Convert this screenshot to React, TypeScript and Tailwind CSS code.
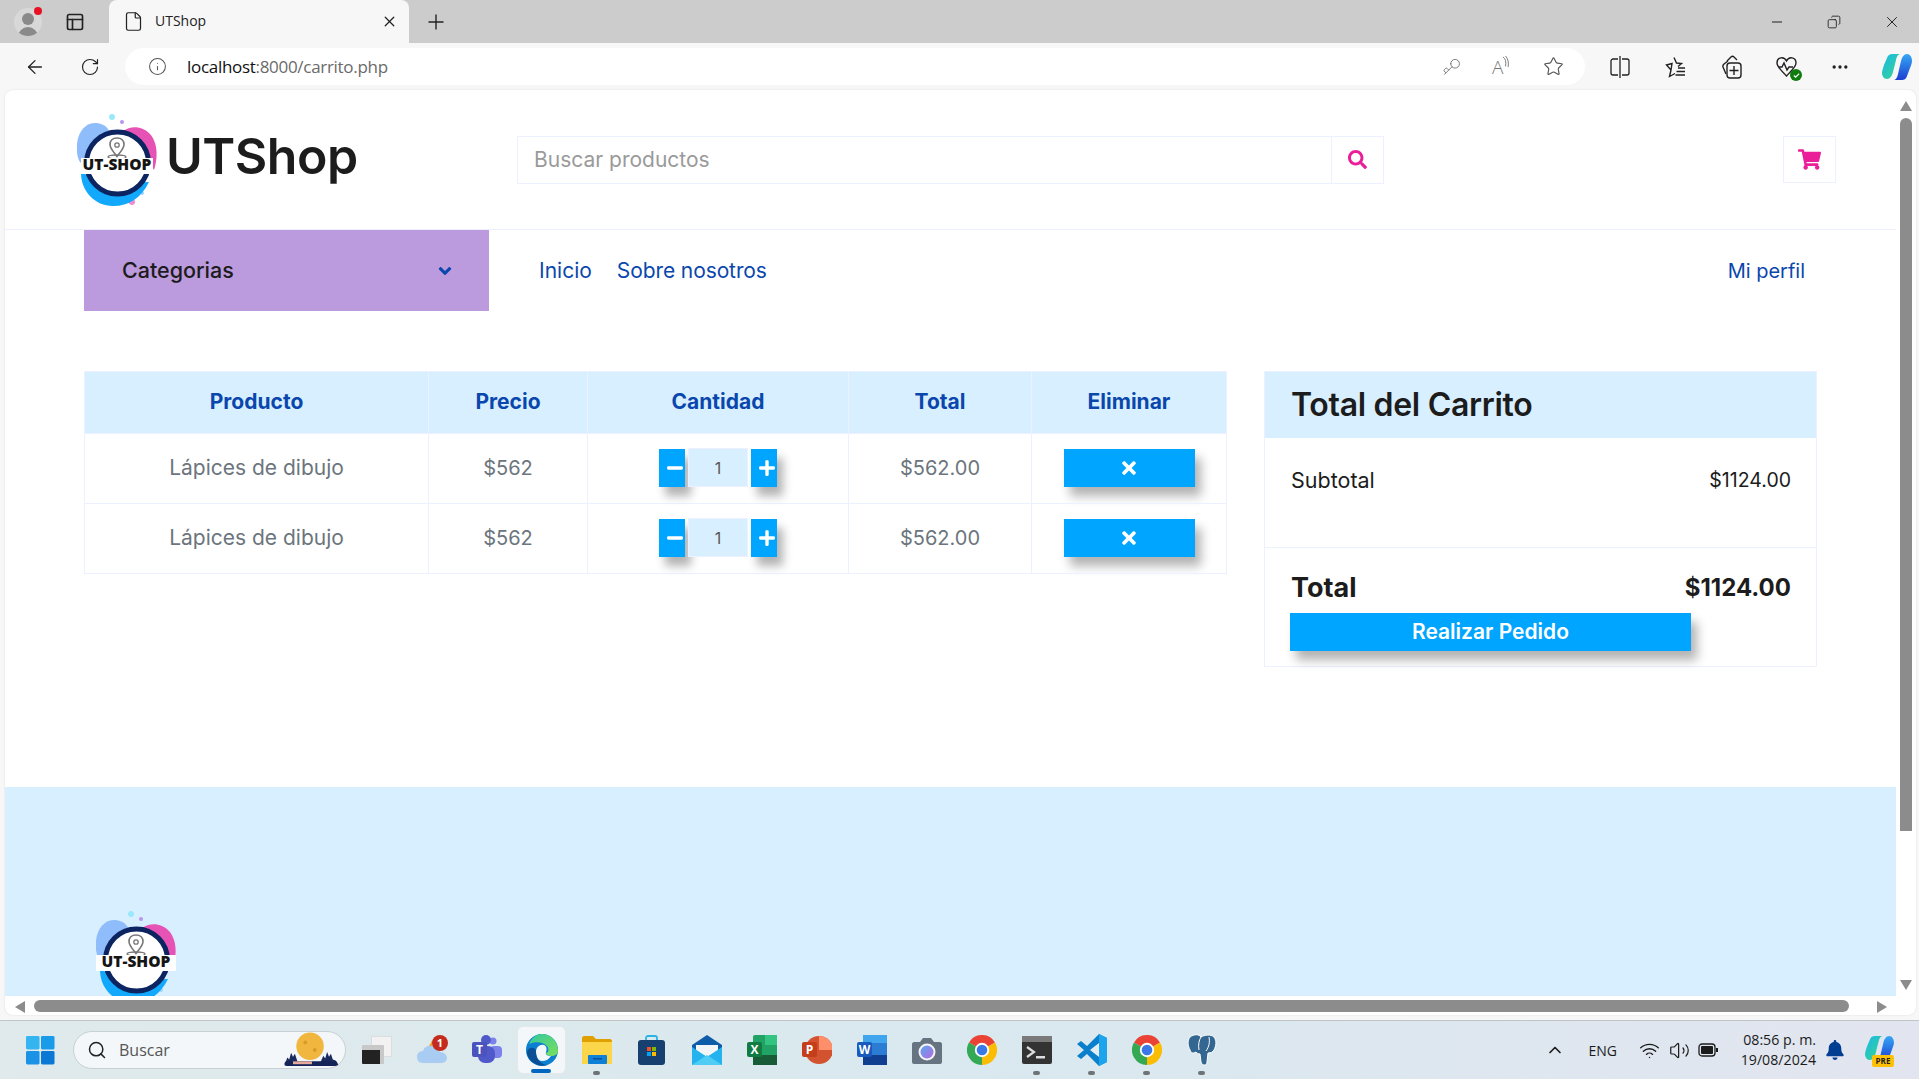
import React from "react";
import { FaSearch, FaShoppingCart, FaAngleDown, FaMinus, FaPlus, FaTimes, FaBell } from "react-icons/fa";
import { ArrowLeft, RotateCw, Info, Key, Star, X, Plus, Minus, Copy, Search, ChevronUp, Wifi, Volume2, MoreHorizontal, File, PanelsTopLeft } from "lucide-react";

const cartItems = [
  { name: "Lápices de dibujo", price: "$562", qty: 1, total: "$562.00" },
  { name: "Lápices de dibujo", price: "$562", qty: 1, total: "$562.00" },
];

function Logo({ band }: { band?: boolean }) {
  return (
    <svg viewBox="0 0 80 94" className="w-[80px] h-[94px] shrink-0">
      <circle cx="35" cy="4" r="3" fill="#9be7fb" />
      <circle cx="45" cy="9" r="2" fill="#b794f0" />
      <circle cx="55" cy="89" r="3" fill="#f28ccb" />
      <circle cx="65" cy="80" r="2" fill="#9fd4fb" />
      <path d="M0 40C-2 20 8 9 20 10c9 1 14 8 14 14L8 52C3 52 1 46 0 40z" fill="#8fbdfb" />
      <path d="M46 18c8-6 20-5 27 3 8 9 8 24 4 36L60 30z" fill="#e653b4" />
      <path d="M4 60c0 18 14 33 32 33 16 0 28-8 36-24L40 70z" fill="#12a8fb" />
      <circle cx="40.500" cy="50" r="31" fill="#ffffff" stroke="#0c2560" strokeWidth="5" />
      <path d="M40 25c-4.500 0-7 3-7 6.500 0 4 4 8 7 12 3-4 7-8 7-12 0-3.500-2.500-6.500-7-6.500z" fill="none" stroke="#777777" strokeWidth="1.600" />
      <circle cx="40" cy="32" r="2.200" fill="none" stroke="#777777" strokeWidth="1.300" />
      <ellipse cx="40" cy="44" rx="9" ry="2" fill="none" stroke="#777777" strokeWidth="1.300" />
      <rect x={band ? 0 : 4} y="45" width={band ? 80 : 72} height="16" fill="#ffffff" />
      <text x="40" y="57" textAnchor="middle" fontFamily="'Open Sans', sans-serif" fontWeight="800" fontSize="15.500" fill="#151515">
        UT-SHOP
      </text>
    </svg>
  );
}

function ChromeLogo() {
  return (
    <svg viewBox="0 0 48 48" className="w-[30px] h-[30px]">
      <path d="M24 24 3.200 12A24 24 0 0 1 44.800 12Z" fill="#ea4335" />
      <path d="M24 24 3.200 12A24 24 0 0 0 24 48Z" fill="#34a853" />
      <path d="M24 24 44.800 12A24 24 0 0 1 24 48Z" fill="#fbbc04" />
      <circle cx="24" cy="24" r="11.500" fill="#ffffff" />
      <circle cx="24" cy="24" r="8.500" fill="#3b78e7" />
    </svg>
  );
}

function CopilotLogo({ size, id }: { size: string; id: string }) {
  return (
    <svg viewBox="0 0 30 28" className={size}>
      <defs>
        <linearGradient id={`${id}A`} x1="0" y1="0" x2="1" y2="1">
          <stop offset="0" stopColor="#19b8e8" />
          <stop offset="1" stopColor="#3bd68a" />
        </linearGradient>
        <linearGradient id={`${id}B`} x1="0" y1="0" x2="0" y2="1">
          <stop offset="0" stopColor="#35a8f5" />
          <stop offset="1" stopColor="#1c3fd2" />
        </linearGradient>
      </defs>
      <path d="M10 1h9c-3 0-4 2-5 6l-3 12c-1 4-3 7-6 7-3 0-5-3-5-6 0-2 1-5 2-8l3-7c1-3 3-4 5-4z" fill={`url(#${id}A)`} />
      <path d="M20 27h-9c3 0 4-2 5-6l3-13c1-4 3-7 6-7 3 0 5 3 5 7 0 2-1 4-2 7l-3 8c-1 3-3 4-5 4z" fill={`url(#${id}B)`} />
    </svg>
  );
}

function TabBar() {
  return (
    <div className="h-[43px] shrink-0 bg-[#cccccc] flex items-end">
      <div className="w-[109px] h-[43px] flex items-center">
        <div className="relative ml-[14px] w-[28px] h-[28px] rounded-full bg-[#d8d8d8] overflow-hidden">
          <div className="mx-auto mt-[5px] w-[12px] h-[12px] rounded-full bg-[#8a8a8a]" />
          <div className="mx-auto mt-[2px] w-[20px] h-[12px] rounded-t-full bg-[#8a8a8a]" />
        </div>
        <div className="w-[8px] h-[8px] -ml-[8px] -mt-[21px] rounded-full bg-[#e81123] z-10" />
        <PanelsTopLeft className="ml-[23px] w-[20px] h-[20px] text-[#222222]" strokeWidth={2} />
      </div>
      <div className="w-[300px] h-[43px] bg-[#f7f7f7] rounded-t-lg flex items-center pl-[14px] pr-[11px]">
        <File className="w-[21px] h-[21px] text-[#222222]" strokeWidth={1.400} />
        <span className="ml-[11px] text-[14px] -mt-[2px] text-[#222222] flex-1">UTShop</span>
        <X className="w-[17px] h-[17px] text-[#222222]" strokeWidth={1.800} />
      </div>
      <div className="h-[43px] flex items-center ml-[15px]">
        <Plus className="w-[24px] h-[24px] text-[#222222]" strokeWidth={1.400} />
      </div>
      <div className="ml-auto h-[43px] flex items-center pr-[18px] gap-[42px] text-[#222222]">
        <Minus className="w-[16px] h-[16px]" strokeWidth={1.500} />
        <Copy className="w-[14px] h-[14px] scale-x-[-1]" strokeWidth={1.500} />
        <X className="w-[18px] h-[18px]" strokeWidth={1.300} />
      </div>
    </div>
  );
}

function Toolbar() {
  return (
    <div className="h-[47px] shrink-0 bg-[#f7f7f7] flex items-start pt-[5px] text-[#222222]">
      <div className="w-[125px] h-[37px] flex items-center pl-[24px] gap-[34px]">
        <ArrowLeft className="w-[22px] h-[22px]" strokeWidth={1.400} />
        <RotateCw className="w-[20px] h-[20px]" strokeWidth={1.400} />
      </div>
      <div className="w-[1460px] h-[37px] bg-white rounded-full flex items-center pl-[23px] pr-[21px]">
        <Info className="w-[19px] h-[19px] text-[#555555]" strokeWidth={1.300} />
        <span className="ml-[20px] text-[17px] tracking-[-0.3px] text-[#111111]">
          localhost<span className="text-[#6a6a6a]">:8000/carrito.php</span>
        </span>
        <div className="ml-auto flex items-center gap-[31px] text-[#777777]">
          <Key className="w-[19px] h-[19px] rotate-180" strokeWidth={1.200} />
          <div className="flex items-start w-[20px] h-[22px]">
            <span className="text-[19px] leading-[22px] font-light">A</span>
            <svg viewBox="0 0 8 14" className="w-[7px] h-[12px] -ml-[1px]" fill="none" stroke="#777777" strokeWidth="1.100">
              <path d="M1 1c3 2 4 6 3 11" />
              <path d="M4 0c3 3 4 8 3 13" />
            </svg>
          </div>
          <Star className="w-[21px] h-[21px] text-[#555555]" strokeWidth={1.300} />
        </div>
      </div>
      <div className="flex-1 h-[37px] flex items-center pl-[25px] gap-[35px]">
        <svg viewBox="0 0 20 22" className="w-[20px] h-[22px]" fill="none" stroke="#222222" strokeWidth="1.300">
          <path d="M10 0v22M8 3H3C2 3 1 4 1 5v12c0 1 1 2 2 2h5M12 3h5c1 0 2 1 2 2v12c0 1-1 2-2 2h-5" />
        </svg>
        <svg viewBox="0 0 21 22" className="w-[21px] h-[22px]" fill="none" stroke="#222222" strokeWidth="1.400">
          <path d="M9 1.500 11.500 7l5 .500-3.500 3M6 14l-1.500 6.500 5.500-3M6 14l-4.500-5 5.500-1.500z" />
          <path d="M13 12h7M11.500 15.500H20M10.500 19H20" />
        </svg>
        <svg viewBox="0 0 21 24" className="w-[21px] h-[24px]" fill="none" stroke="#222222" strokeWidth="1.400">
          <path d="M6 6 10 2c1-1 2-1 3 0l3 3M5 19 2 12c-.500-1 0-2 1-3l4-3" />
          <rect x="6" y="8" width="14" height="15" rx="3" />
          <path d="M13 11v9M8.500 15.500h9" />
        </svg>
        <div className="relative w-[21px] h-[21px] -ml-[1px]">
          <svg viewBox="0 0 21 21" className="w-[21px] h-[21px]" fill="none" stroke="#222222" strokeWidth="1.400">
            <path d="M10.500 5C8 0 1 1 1 7c0 4 5 8 9.500 13C15 15 20 11 20 7c0-6-7-7-9.500-2z" />
            <path d="M3 11h3l2-4 3 7 2-3h4" />
          </svg>
          <div className="absolute -right-[5px] -bottom-[4px] w-[12px] h-[12px] rounded-full bg-[#107c10] flex items-center justify-center">
            <svg viewBox="0 0 8 8" className="w-[7px] h-[7px]" fill="none" stroke="#ffffff" strokeWidth="1.300">
              <path d="M1 4l2 2 4-4" />
            </svg>
          </div>
        </div>
        <MoreHorizontal className="w-[20px] h-[20px] -ml-[2px]" strokeWidth={2} />
        <CopilotLogo id="cpTop" size="w-[30px] h-[28px] -ml-[3px]" />
      </div>
    </div>
  );
}

function Header() {
  return (
    <header className="h-[140px] shrink-0 border-b border-[#edf1ff] flex items-center pl-[72px] pr-[60px]">
      <div className="w-[440px] flex items-center">
        <Logo />
        <span className="ml-[9px] -mt-[6px] text-[50px] font-semibold text-[#1c1c1c] tracking-[-0.5px]">UTShop</span>
      </div>
      <div className="w-[867px] h-[48px] border border-[#edf1ff] flex">
        <div className="flex-1 flex items-center pl-[16px] text-[21px] text-[#9a9a9a]">Buscar productos</div>
        <div className="w-[52px] border-l border-[#edf1ff] flex items-center justify-center">
          <FaSearch className="w-[19px] h-[19px] text-[#e91e98]" />
        </div>
      </div>
      <div className="ml-auto w-[53px] h-[47px] border border-[#edf1ff] flex items-center justify-center">
        <FaShoppingCart className="w-[23px] h-[21px] -mt-[1px] -ml-[1px] text-[#e91e98]" />
      </div>
    </header>
  );
}

function NavRow() {
  return (
    <nav className="h-[81px] shrink-0 flex items-center pl-[79px] pr-[91px]">
      <div className="w-[405px] h-[81px] bg-[#bb9add] flex items-center justify-between pl-[38px] pr-[34px]">
        <span className="text-[21.500px] font-medium text-[#1c1c1c]">Categorias</span>
        <FaAngleDown className="w-[20px] h-[20px] text-[#0a47ad]" />
      </div>
      <a className="ml-[50px] text-[21px] text-[#0a47ad]">Inicio</a>
      <a className="ml-[25px] text-[21px] tracking-[-0.1px] text-[#0a47ad]">Sobre nosotros</a>
      <a className="ml-auto text-[20px] text-[#0a47ad]">Mi perfil</a>
    </nav>
  );
}

const btnShadow = "shadow-[6px_9px_10px_rgba(0,0,0,0.3)]";

function QtyControl({ qty }: { qty: number }) {
  return (
    <div className="flex items-center justify-center gap-[3px]">
      <button className={`w-[26px] h-[38px] bg-[#00a5ff] flex items-center justify-center pl-[5px] ${btnShadow}`}>
        <FaMinus className="w-[18px] h-[18px] shrink-0 text-white" />
      </button>
      <div className="w-[60px] h-[39px] bg-[#d8efff] border border-[#edf1ff] flex items-center justify-center text-[16px] text-[#555555]">
        {qty}
      </div>
      <button className={`w-[26px] h-[38px] bg-[#00a5ff] flex items-center justify-center pl-[5px] ${btnShadow}`}>
        <FaPlus className="w-[18px] h-[18px] shrink-0 text-white" />
      </button>
    </div>
  );
}

function CartTable() {
  return (
    <table className="w-[1142px] h-[202px] table-fixed border-collapse self-start text-center">
      <colgroup>
        <col className="w-[344px]" />
        <col className="w-[159px]" />
        <col className="w-[261px]" />
        <col className="w-[183px]" />
        <col className="w-[195px]" />
      </colgroup>
      <thead>
        <tr className="h-[62px] bg-[#d8efff] text-[21px] text-[#0a47ad]">
          {["Producto", "Precio", "Cantidad", "Total", "Eliminar"].map((h) => (
            <th key={h} className="border border-[#edf1ff] font-bold pb-[2px]">
              {h}
            </th>
          ))}
        </tr>
      </thead>
      <tbody className="text-[20px] text-[#6c757d]">
        {cartItems.map((item, i) => (
          <tr key={i} className="h-[70px]">
            <td className="border border-[#edf1ff] pb-[2px] text-[21px]">{item.name}</td>
            <td className="border border-[#edf1ff] pb-[2px]">{item.price}</td>
            <td className="border border-[#edf1ff] pb-[2px]">
              <QtyControl qty={item.qty} />
            </td>
            <td className="border border-[#edf1ff] pb-[2px]">{item.total}</td>
            <td className="border border-[#edf1ff] pb-[2px]">
              <button className={`mx-auto w-[131px] h-[38px] bg-[#00a5ff] flex items-center justify-center ${btnShadow}`}>
                <FaTimes className="w-[20px] h-[20px] text-white" />
              </button>
            </td>
          </tr>
        ))}
      </tbody>
    </table>
  );
}

function CartSummary() {
  return (
    <aside className="w-[553px] h-[296px] border border-[#edf1ff] self-start text-[#1c1c1c]">
      <div className="h-[66px] bg-[#d8efff] flex items-center pl-[26px] text-[32px] font-semibold tracking-[-0.3px]">Total del Carrito</div>
      <div className="h-[110px] border-b border-[#edf1ff] flex justify-between pl-[26px] pr-[25px] pt-[30px] text-[19.500px] leading-[24px]">
        <span className="text-[21.500px]">Subtotal</span>
        <span>$1124.00</span>
      </div>
      <div className="flex justify-between pl-[26px] pr-[25px] pt-[24px] text-[27px] leading-[32px] font-bold">
        <span>Total</span>
        <span className="text-[24px]">$1124.00</span>
      </div>
      <button className={`block ml-[25px] mt-[9px] w-[401px] h-[38px] bg-[#00a5ff] text-white text-[21px] font-semibold ${btnShadow}`}>
        Realizar Pedido
      </button>
    </aside>
  );
}

function Footer() {
  return (
    <footer className="h-[209px] shrink-0 bg-[#d8efff] pl-[91px] pt-[123px] overflow-hidden">
      <Logo band />
    </footer>
  );
}

function VScroll() {
  return (
    <div className="flex-1 flex flex-col items-center pt-[11px]">
      <div className="w-0 h-0 border-x-[6px] border-x-transparent border-b-[10px] border-b-[#8c8c8c]" />
      <div className="mt-[7px] w-[12px] h-[713px] rounded-t-full bg-[#8c8c8c]" />
      <div className="mt-auto mb-[6px] w-0 h-0 border-x-[6px] border-x-transparent border-t-[10px] border-t-[#8c8c8c]" />
    </div>
  );
}

function HScroll() {
  return (
    <div className="h-[19px] shrink-0 flex items-start pt-[4px] pl-[10px]">
      <div className="mt-px w-0 h-0 border-y-[6px] border-y-transparent border-r-[10px] border-r-[#8c8c8c]" />
      <div className="ml-[9px] w-[1815px] h-[12px] rounded-full bg-[#8c8c8c]" />
      <div className="mt-px ml-[28px] w-0 h-0 border-y-[6px] border-y-transparent border-l-[10px] border-l-[#8c8c8c]" />
    </div>
  );
}

function PageView() {
  return (
    <div className="h-[925px] shrink-0 ml-[5px] mr-[3px] rounded-lg bg-white overflow-hidden flex flex-col font-['Inter',sans-serif] shadow-[0_0_2px_rgba(0,0,0,0.12)]">
      <div className="h-[906px] flex">
        <main className="w-[1891px] flex flex-col overflow-hidden">
          <Header />
          <NavRow />
          <section className="h-[476px] shrink-0 pt-[60px] pl-[79px] flex gap-[37px]">
            <CartTable />
            <CartSummary />
          </section>
          <Footer />
        </main>
        <VScroll />
      </div>
      <HScroll />
    </div>
  );
}

function TaskIcon({ children, mark }: { children: React.ReactNode; mark?: "dot" | "active" }) {
  return (
    <div className="relative w-[55px] h-[48px] flex items-center justify-center">
      {mark === "active" && <div className="absolute inset-y-0 inset-x-[3px] bg-[#f4f7f9] rounded-md border border-[#e3e8eb]" />}
      <div className="relative flex">{children}</div>
      {mark === "dot" && <div className="absolute bottom-[-1px] left-[24px] w-[7px] h-[4px] rounded-full bg-[#6e7378]" />}
      {mark === "active" && <div className="absolute bottom-[1px] left-[17px] w-[20px] h-[4px] rounded-full bg-[#0067c0]" />}
    </div>
  );
}

function Taskbar() {
  return (
    <div className="h-[59px] shrink-0 mt-[5px] border-t border-[#bfc5c9] bg-gradient-to-r from-[#e0eaec] via-[#d9e9ef] to-[#e2e5ef] flex items-center font-['Open_Sans',sans-serif]">
      <svg viewBox="0 0 30 30" className="ml-[26px] w-[29px] h-[29px]">
        <rect x="0" y="0" width="14" height="14" rx="1.500" fill="#35b4f2" />
        <rect x="15.500" y="0" width="14" height="14" rx="1.500" fill="#1a9bea" />
        <rect x="0" y="15.500" width="14" height="14" rx="1.500" fill="#1a92e6" />
        <rect x="15.500" y="15.500" width="14" height="14" rx="1.500" fill="#0a78d4" />
      </svg>
      <div className="ml-[18px] w-[273px] h-[38px] rounded-full bg-[#f3f7f9] border border-[#c9d0d4] flex items-center pl-[13px]">
        <Search className="w-[20px] h-[20px] text-[#222222]" strokeWidth={1.800} />
        <span className="ml-[12px] text-[16px] text-[#555555]">Buscar</span>
        <svg viewBox="0 0 58 38" className="ml-auto mr-[5px] w-[58px] h-[36px]">
          <circle cx="28" cy="15" r="14.500" fill="#f0b63e" />
          <circle cx="23" cy="11" r="2" fill="#d99a2b" />
          <circle cx="33" cy="19" r="2" fill="#d99a2b" />
          <path d="M1 35l3-8 2 2 2-7 2 4 2-3 3 9h24l3-7 2 3 2-7 2 5 2-3 2 6 3 1 3 5z" fill="#1b2a5e" />
          <rect x="1" y="31" width="56" height="5" rx="2.500" fill="#152458" />
          <rect x="10" y="31" width="20" height="3" fill="#e7a99a" />
        </svg>
      </div>
      <div className="ml-[16px] w-[30px] h-[28px] relative">
        <div className="ml-[9px] w-[21px] h-[21px] bg-[#f2f2f2] border border-[#dddddd]" />
        <div className="absolute left-0 bottom-0 w-[22px] h-[19px] bg-[#222222] border-t-[5px] border-r-[4px] border-[#c8c8c8] rounded-[1px]" />
      </div>
      <div className="ml-[12px] flex items-center">
        <TaskIcon>
          <svg viewBox="0 0 32 30" className="w-[32px] h-[30px]">
            <path d="M8 14c4-1 7-5 8-9 2 5-1 11-8 9z" fill="#f59b23" />
            <path d="M7 28c-4 0-6-3-6-6 0-4 3-6 6-6 1-4 5-6 9-5 4 0 7 3 8 6 4 0 7 3 7 6 0 3-3 5-6 5z" fill="#a9cdf2" />
            <circle cx="24" cy="8" r="8" fill="#c42b1c" />
            <text x="24" y="12" textAnchor="middle" fontSize="11" fontWeight="700" fill="#ffffff" fontFamily="'Open Sans', sans-serif">1</text>
          </svg>
        </TaskIcon>
        <TaskIcon>
          <svg viewBox="0 0 30 30" className="w-[30px] h-[30px]">
            <circle cx="21" cy="6" r="3.500" fill="#7b83eb" />
            <rect x="18" y="11" width="12" height="12" rx="4" fill="#7b83eb" />
            <circle cx="14" cy="5" r="5" fill="#5059c9" />
            <rect x="6" y="11" width="17" height="17" rx="7" fill="#5059c9" />
            <rect x="0" y="7" width="15" height="15" rx="2" fill="#4b53bc" />
            <text x="7.500" y="19" textAnchor="middle" fontSize="12" fontWeight="700" fill="#ffffff" fontFamily="'Open Sans', sans-serif">T</text>
          </svg>
        </TaskIcon>
        <TaskIcon mark="active">
          <svg viewBox="0 0 32 32" className="w-[32px] h-[32px]">
            <defs>
              <linearGradient id="edgeA" x1="0" y1="0" x2="1" y2="1">
                <stop offset="0" stopColor="#32c8a0" />
                <stop offset="1" stopColor="#7be05a" />
              </linearGradient>
            </defs>
            <circle cx="16" cy="16" r="16" fill="#0c7fd0" />
            <path d="M3 10C6 3 11 0 16 0c9 0 16 7 16 17 0 3-3 5-7 5-2 0-5-1-5-3 3-1 3-4 1-7-3-4-12-5-18-2z" fill="url(#edgeA)" />
            <path d="M10 18c0-5 4-8 8-7 3 1 3 5 2 7-1 3 2 4 5 4-2 3-5 5-9 5-4 0-6-4-6-9z" fill="#f4f7f9" />
            <path d="M10 18c0 6 4 12 11 13-3 1-6 1-9 0C6 29 1 24 1 18c1-5 9-6 9 0z" fill="#0a4f94" />
          </svg>
        </TaskIcon>
        <TaskIcon mark="dot">
          <svg viewBox="0 0 30 28" className="w-[30px] h-[28px]">
            <path d="M0 2c0-1 1-2 2-2h9l3 3h14c1 0 2 1 2 2v3H0z" fill="#e0a100" />
            <rect x="0" y="6" width="30" height="22" fill="#fbd54a" />
            <rect x="6" y="19" width="19" height="9" rx="1" fill="#0f80d7" />
            <rect x="11" y="22" width="9" height="1.500" fill="#0a4f94" />
          </svg>
        </TaskIcon>
        <TaskIcon>
          <svg viewBox="0 0 27 30" className="w-[27px] h-[30px]">
            <path d="M8 7V3c0-1 1-2 2-2h7c1 0 2 1 2 2v4" fill="none" stroke="#2bb3e6" strokeWidth="1.800" />
            <rect x="0" y="5" width="27" height="25" rx="3" fill="#15406f" />
            <rect x="9" y="12" width="4" height="4" fill="#f25022" />
            <rect x="14" y="12" width="4" height="4" fill="#7fba00" />
            <rect x="9" y="17" width="4" height="4" fill="#00a4ef" />
            <rect x="14" y="17" width="4" height="4" fill="#ffb900" />
          </svg>
        </TaskIcon>
        <TaskIcon>
          <svg viewBox="0 0 30 30" className="w-[30px] h-[30px]">
            <path d="M15 0 30 10v19H0V10z" fill="#0f5ca8" />
            <path d="M4 10h22v6l-11 6L4 16z" fill="#f3f6f8" />
            <path d="M0 12 15 22 30 12v18H0z" fill="#24b3ee" />
            <path d="M15 20 30 30H0z" fill="#4fcdf5" />
          </svg>
        </TaskIcon>
        <TaskIcon>
          <svg viewBox="0 0 30 30" className="w-[30px] h-[30px]">
            <rect x="6" y="0" width="24" height="30" rx="2" fill="#21a366" />
            <rect x="18" y="0" width="12" height="10" fill="#33c481" />
            <rect x="6" y="20" width="24" height="10" fill="#185c37" />
            <rect x="0" y="7" width="15" height="15" rx="2" fill="#107c41" />
            <text x="7.500" y="19" textAnchor="middle" fontSize="12" fontWeight="700" fill="#ffffff" fontFamily="'Open Sans', sans-serif">X</text>
          </svg>
        </TaskIcon>
        <TaskIcon>
          <svg viewBox="0 0 30 30" className="w-[30px] h-[30px]">
            <circle cx="17" cy="15" r="14" fill="#d35230" />
            <path d="M17 1a14 14 0 0 1 14 14H17z" fill="#ff8f6b" />
            <rect x="0" y="7" width="15" height="15" rx="2" fill="#c43e1c" />
            <text x="7.500" y="19" textAnchor="middle" fontSize="12" fontWeight="700" fill="#ffffff" fontFamily="'Open Sans', sans-serif">P</text>
          </svg>
        </TaskIcon>
        <TaskIcon>
          <svg viewBox="0 0 30 30" className="w-[30px] h-[30px]">
            <rect x="6" y="0" width="24" height="30" rx="2" fill="#2b7cd3" />
            <rect x="6" y="0" width="24" height="8" fill="#41a5ee" />
            <rect x="6" y="20" width="24" height="10" fill="#103f91" />
            <rect x="0" y="7" width="15" height="15" rx="2" fill="#185abd" />
            <text x="7.500" y="19" textAnchor="middle" fontSize="12" fontWeight="700" fill="#ffffff" fontFamily="'Open Sans', sans-serif">W</text>
          </svg>
        </TaskIcon>
        <TaskIcon>
          <svg viewBox="0 0 30 28" className="w-[30px] h-[28px]">
            <defs>
              <linearGradient id="camA" x1="0" y1="0" x2="1" y2="1">
                <stop offset="0" stopColor="#5aa6ee" />
                <stop offset="1" stopColor="#b56be0" />
              </linearGradient>
            </defs>
            <path d="M2 6h6l3-4h8l3 4h6c1 0 2 1 2 2v18c0 1-1 2-2 2H2c-1 0-2-1-2-2V8c0-1 1-2 2-2z" fill="#667380" />
            <circle cx="15" cy="16" r="8.500" fill="#f2f4f6" />
            <circle cx="15" cy="16" r="6.500" fill="url(#camA)" />
          </svg>
        </TaskIcon>
        <TaskIcon>
          <ChromeLogo />
        </TaskIcon>
        <TaskIcon mark="dot">
          <svg viewBox="0 0 30 28" className="w-[30px] h-[28px]">
            <rect x="0" y="0" width="30" height="28" rx="2" fill="#333333" />
            <rect x="0" y="0" width="30" height="6" fill="#7a7a7a" />
            <path d="M5 11l7 5-7 5" fill="none" stroke="#dddddd" strokeWidth="2.200" />
            <rect x="14" y="20" width="9" height="2.500" fill="#dddddd" />
          </svg>
        </TaskIcon>
        <TaskIcon mark="dot">
          <svg viewBox="0 0 30 32" className="w-[30px] h-[32px]">
            <path d="M22 0 30 4v24l-8 4-12-12-6 5-4-3 7-6-7-6 4-3 6 5z" fill="#0a7fcb" />
            <path d="M22 0 30 4v24l-8 4z" fill="#1ca4ec" />
            <path d="M22 9v14l-9-7z" fill="#e4edf1" />
          </svg>
        </TaskIcon>
        <TaskIcon mark="dot">
          <ChromeLogo />
        </TaskIcon>
        <TaskIcon mark="dot">
          <svg viewBox="0 0 30 32" className="w-[30px] h-[32px]">
            <path d="M3 3c4-3 9-3 11 0 3-2 10-3 13 0 3 4 2 9 0 13-1 2-3 3-6 3l-1 9c0 4-5 4-6 0l-1-8c-2 0-3-1-4-2-3 2-5 1-6-2C1 12 0 7 3 3z" fill="#336791" stroke="#ffffff" strokeWidth="1" />
            <path d="M14 3c-2 3-3 8-2 13M22 3c1 5 0 10-3 14" fill="none" stroke="#ffffff" strokeWidth="1" />
          </svg>
        </TaskIcon>
      </div>
      <div className="ml-auto flex items-center pr-[25px] text-[#1b1b1b]">
        <ChevronUp className="w-[20px] h-[20px]" strokeWidth={2} />
        <span className="ml-[24px] text-[14px]">ENG</span>
        <Wifi className="ml-[22px] w-[21px] h-[21px]" strokeWidth={1.600} />
        <Volume2 className="ml-[9px] w-[21px] h-[21px]" strokeWidth={1.400} />
        <svg viewBox="0 0 20 14" className="ml-[8px] w-[20px] h-[14px]" fill="none" stroke="#1b1b1b" strokeWidth="1.300">
          <rect x="1" y="1" width="16" height="12" rx="3" />
          <rect x="3" y="3" width="12" height="8" rx="1" fill="#1b1b1b" stroke="none" />
          <path d="M19 5v4" strokeWidth="2" />
        </svg>
        <div className="ml-[20px] w-[78px] text-[14.200px] leading-[20px] text-right whitespace-nowrap">
          <div>08:56 p. m.</div>
          <div>19/08/2024</div>
        </div>
        <FaBell className="ml-[10px] w-[18px] h-[20px] text-[#003e92]" />
        <div className="relative ml-[21px] w-[29px] h-[30px]">
          <CopilotLogo id="cpTask" size="w-[29px] h-[27px]" />
          <div className="absolute right-0 bottom-[-2px] w-[22px] h-[12px] bg-[#ffc107] rounded-[2px] flex items-center justify-center text-[8px] font-bold text-[#222222]">
            PRE
          </div>
        </div>
      </div>
    </div>
  );
}

export default function App() {
  return (
    <div className="w-[1919px] h-[1079px] flex flex-col overflow-hidden bg-[#f7f7f7] font-['Open_Sans',sans-serif]">
      <TabBar />
      <Toolbar />
      <PageView />
      <Taskbar />
    </div>
  );
}
